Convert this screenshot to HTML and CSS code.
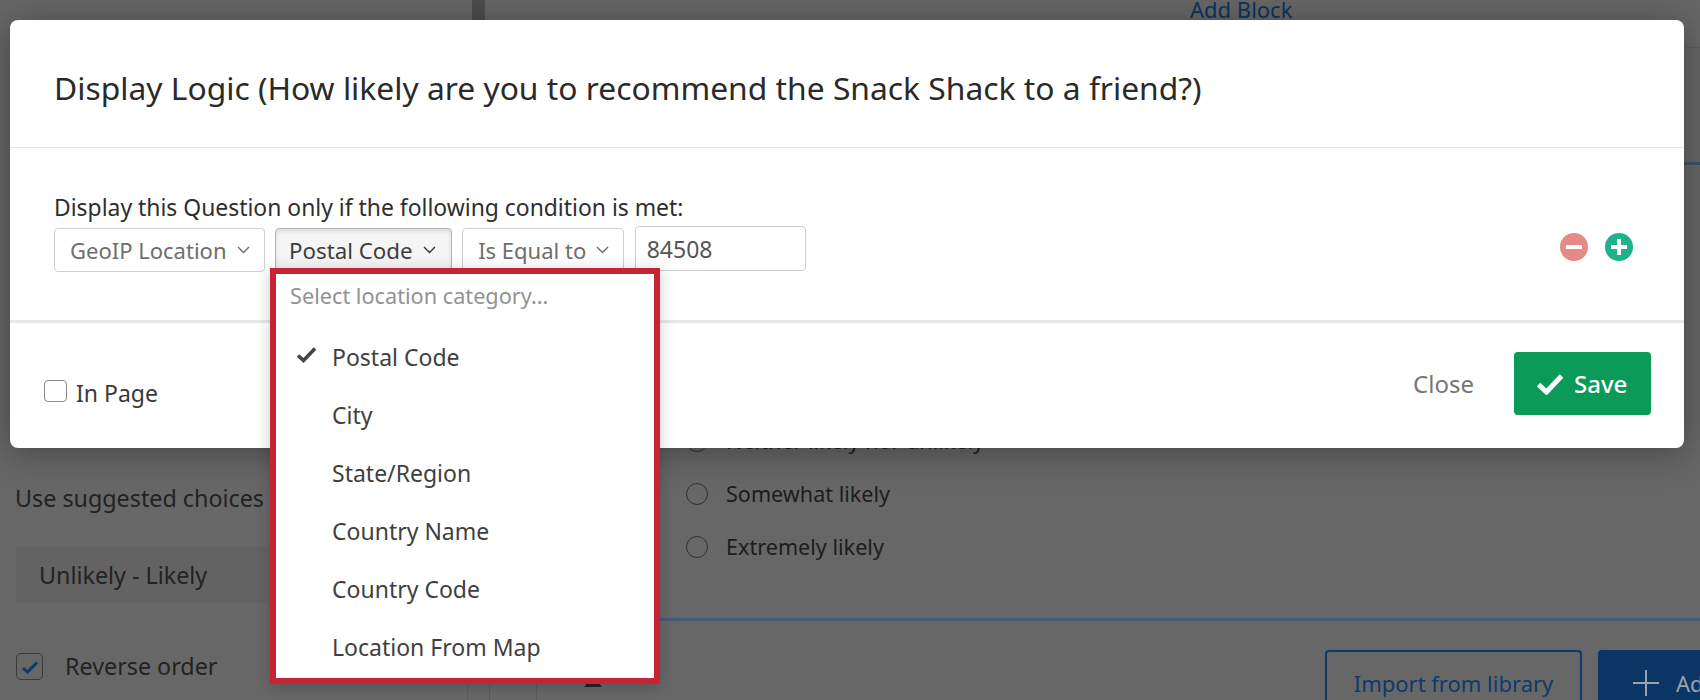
FILE: index.html
```html
<!DOCTYPE html>
<html lang="en">
<head>
    <meta charset="UTF-8">
    <title>Display Logic</title>
    <link rel="stylesheet" href="styles.css">
</head>
<body>
<div class="page">
    <aside class="side">
        <div class="side-label">Use suggested choices</div>
        <div class="side-select">Unlikely - Likely</div>
        <div class="side-check">
            <span class="side-box">
                <svg width="18" height="14" viewBox="0 0 18 14"><path d="M2 8l4.500 4L16 2.500" fill="none" stroke="#0b3a70" stroke-width="3"/></svg>
            </span>
            Reverse order
        </div>
    </aside>
    <div class="gutter">
        <div class="gutter-top"></div>
        <div class="gutter-rule"></div>
    </div>
    <div class="rail"></div>
    <main class="main">
        <div class="add-block"><a>Add Block</a></div>
        <div class="question-top"></div>
        <div class="choices">
            <div class="choice"><span class="radio"></span>Neither likely nor unlikely</div>
            <div class="choice"><span class="radio"></span>Somewhat likely</div>
            <div class="choice"><span class="radio"></span>Extremely likely</div>
        </div>
        <div class="actions">
            <span class="marker"></span>
            <button class="btn-import">Import from library</button>
            <button class="btn-add">
                <svg width="26" height="26" viewBox="0 0 26 26"><path d="M13 0v26M0 13h26" stroke="#98a3b0" stroke-width="2"/></svg>
                Add new question
            </button>
        </div>
    </main>
</div>

<div class="modal">
    <div class="modal-header">
        <h2>Display Logic (How likely are you to recommend the Snack Shack to a friend?)</h2>
    </div>
    <div class="modal-body">
        <div class="condition-label">Display this Question only if the following condition is met:</div>
        <div class="condition">
            <div class="select">GeoIP Location
                <svg class="chevron" width="13" height="8" viewBox="0 0 13 8"><path d="M1 1l5.500 5.500L12 1" fill="none" stroke="#6b6b6b" stroke-width="1.4"/></svg>
            </div>
            <div class="select select-open">Postal Code
                <svg class="chevron" width="13" height="8" viewBox="0 0 13 8"><path d="M1 1l5.500 5.500L12 1" fill="none" stroke="#333" stroke-width="1.4"/></svg>
                <div class="dropdown">
                    <div class="dropdown-hint">Select location category...</div>
                    <ul class="dropdown-list">
                        <li>
                            <svg class="tick" width="21" height="17" viewBox="0 0 21 17"><path d="M2 9.500l5.500 5L19 2.500" fill="none" stroke="#444" stroke-width="3.6"/></svg>
                            Postal Code
                        </li>
                        <li>City</li>
                        <li>State/Region</li>
                        <li>Country Name</li>
                        <li>Country Code</li>
                        <li>Location From Map</li>
                    </ul>
                </div>
            </div>
            <div class="select">Is Equal to
                <svg class="chevron" width="13" height="8" viewBox="0 0 13 8"><path d="M1 1l5.500 5.500L12 1" fill="none" stroke="#6b6b6b" stroke-width="1.4"/></svg>
            </div>
            <input class="value" type="text" value="84508">
            <div class="row-icons">
                <svg width="28" height="28" viewBox="0 0 28 28"><circle cx="14" cy="14" r="14" fill="#e58a85"/><path d="M6 14h16" stroke="#fff" stroke-width="4"/></svg>
                <svg width="28" height="28" viewBox="0 0 28 28"><circle cx="14" cy="14" r="14" fill="#1eb28c"/><path d="M6 14h16M14 6v16" stroke="#fff" stroke-width="4"/></svg>
            </div>
        </div>
    </div>
    <div class="modal-footer">
        <label class="in-page"><span class="checkbox"></span>In Page</label>
        <div class="footer-actions">
            <span class="close">Close</span>
            <button class="save">
                <svg width="28" height="22" viewBox="0 0 28 22"><path d="M2.500 11.500l8 7.500L25.500 3" fill="none" stroke="#fff" stroke-width="5"/></svg>
                Save
            </button>
        </div>
    </div>
</div>
</body>
</html>
```
FILE: styles.css
```css
* { box-sizing: border-box; }
html, body { margin: 0; padding: 0; }
body {
    width: 1700px;
    height: 700px;
    overflow: hidden;
    position: relative;
    background-color: #676767;
    color: #222;
    font-family: "Noto Sans", "Open Sans", sans-serif;
    font-size: 22px;
}

/* page behind the overlay */
.page { display: flex; height: 700px; }
.side { width: 467px; padding: 480px 0 0 15px; font-size: 23.3px; }
.side-label { line-height: 36px; }
.side-select {
    margin: 31px 0 0 1px;
    height: 56px;
    width: 300px;
    padding-left: 23px;
    line-height: 56px;
    background-color: #636363;
}
.side-check { display: flex; align-items: center; gap: 22px; margin: 50px 0 0 1px; line-height: 27px; }
.side-box {
    width: 27px;
    height: 27px;
    border: 1.5px solid #3a3a3a;
    border-radius: 5px;
    display: flex;
    align-items: center;
    justify-content: center;
}
.gutter { width: 23px; display: flex; flex-direction: column; }
.gutter-top { width: 13px; height: 60px; margin: 0 auto; background-color: #4d4d4d; }
.gutter-rule { flex: 1; border-left: 1px solid #5c5c5c; border-right: 1px solid #5c5c5c; }
.rail { width: 47px; margin-top: 60px; border-right: 1px solid #5c5c5c; }
.main { flex: 1; min-width: 0; overflow: hidden; }
.add-block { height: 48px; padding-left: 653px; line-height: 18px; border-bottom: 1px solid #5f5f5f; }
.add-block a { color: #0a3560; }
.question-top { height: 117px; border-bottom: 3px solid #3f5468; }
.choices { height: 456px; padding: 249px 0 0 149px; font-size: 21.6px; border-bottom: 3px solid #4a5a72; }
.choice { display: flex; align-items: center; gap: 18px; height: 53px; color: #1c1c1c; }
.radio { width: 22px; height: 22px; border: 1.5px solid #2e2e2e; border-radius: 50%; }
.actions { display: flex; align-items: flex-start; padding: 29px 0 0 47px; }
.marker {
    margin-top: 26px;
    border-left: 9.5px solid transparent;
    border-right: 9.5px solid transparent;
    border-bottom: 11px solid #262626;
}
.actions button {
    height: 70px;
    flex-shrink: 0;
    padding-bottom: 5px;
    font-family: inherit;
    font-size: 22px;
    border-radius: 4px;
    white-space: nowrap;
}
.btn-import {
    margin-left: 723px;
    width: 257px;
    background: none;
    border: 2px solid #0d3a6b;
    color: #0d3a6b;
}
.btn-add {
    margin-left: 16px;
    display: flex;
    align-items: center;
    gap: 17px;
    padding: 0 20px 0 35px;
    border: none;
    background-color: #0b3565;
    color: #98a3b0;
}

/* modal */
.modal {
    position: absolute;
    left: 10px;
    top: 20px;
    width: 1674px;
    height: 428px;
    background-color: #fff;
    border-radius: 8px;
    box-shadow: 0 4px 36px rgba(0, 0, 0, 0.35);
}
.modal-header { height: 128px; padding: 48px 0 0 44px; border-bottom: 1px solid #e4e4e4; }
.modal-header h2 { margin: 0; font-size: 31.8px; font-weight: 400; line-height: 40px; color: #2a2a2a; }
.modal-body { height: 175px; padding: 43px 51px 0 44px; border-bottom: 3px solid #e8e8e8; }
.condition-label { font-size: 22.9px; line-height: 34px; color: #2e2e2e; }
.condition { display: flex; align-items: flex-start; gap: 10.5px; margin-top: 3px; }
.select {
    position: relative;
    display: flex;
    align-items: center;
    gap: 10px;
    height: 44px;
    padding: 0 14px 0 15px;
    color: #6e6e6e;
    white-space: nowrap;
    background-color: #fff;
    border: 1px solid #cfcfcf;
    border-radius: 4px;
}
.select-open {
    padding: 0 15px 0 13px;
    font-size: 22.3px;
    color: #3d3d3d;
    background-color: #f5f5f5;
    border-color: #b4b4b4;
    box-shadow: inset 0 2px 4px rgba(0, 0, 0, 0.12);
}
.value {
    width: 171px;
    height: 45px;
    margin-top: -2px;
    padding: 0 11px;
    font-family: inherit;
    font-size: 23px;
    color: #555;
    border: 1px solid #cfcfcf;
    border-radius: 4px;
}
.row-icons { display: flex; gap: 17px; margin: 5px 0 0 auto; }

/* open dropdown with the red callout */
.dropdown {
    position: absolute;
    left: -6px;
    top: 39px;
    width: 390px;
    height: 416px;
    font-size: 23px;
    background-color: #fff;
    border: 6px solid #c62434;
    box-shadow: 0 2px 14px rgba(0, 0, 0, 0.2);
    z-index: 10;
}
.dropdown-hint { padding: 7px 0 0 14px; font-size: 21.7px; line-height: 30px; color: #929292; }
.dropdown-list { list-style: none; margin: 17px 0 0; padding: 0; color: #3f3f3f; }
.dropdown-list li { position: relative; height: 58px; padding-left: 56px; line-height: 58px; }
.tick { position: absolute; left: 20px; top: 18px; }

.modal-footer { display: flex; justify-content: space-between; align-items: flex-start; padding: 29px 33px 0 34px; }
.in-page { display: flex; align-items: center; gap: 9px; margin-top: 25px; font-size: 23px; color: #3a3a3a; }
.checkbox { width: 23px; height: 22px; margin-top: -5px; border: 1.5px solid #8a8a8a; border-radius: 4px; }
.footer-actions { display: flex; align-items: center; gap: 40px; font-size: 24px; }
.close { color: #767676; }
.save {
    display: flex;
    align-items: center;
    gap: 10px;
    width: 137px;
    height: 63px;
    padding: 0 0 0 22px;
    border: none;
    border-radius: 4px;
    background-color: #0b9a58;
    color: #fff;
    font-family: inherit;
    font-size: 24px;
    font-weight: 500;
}
```
